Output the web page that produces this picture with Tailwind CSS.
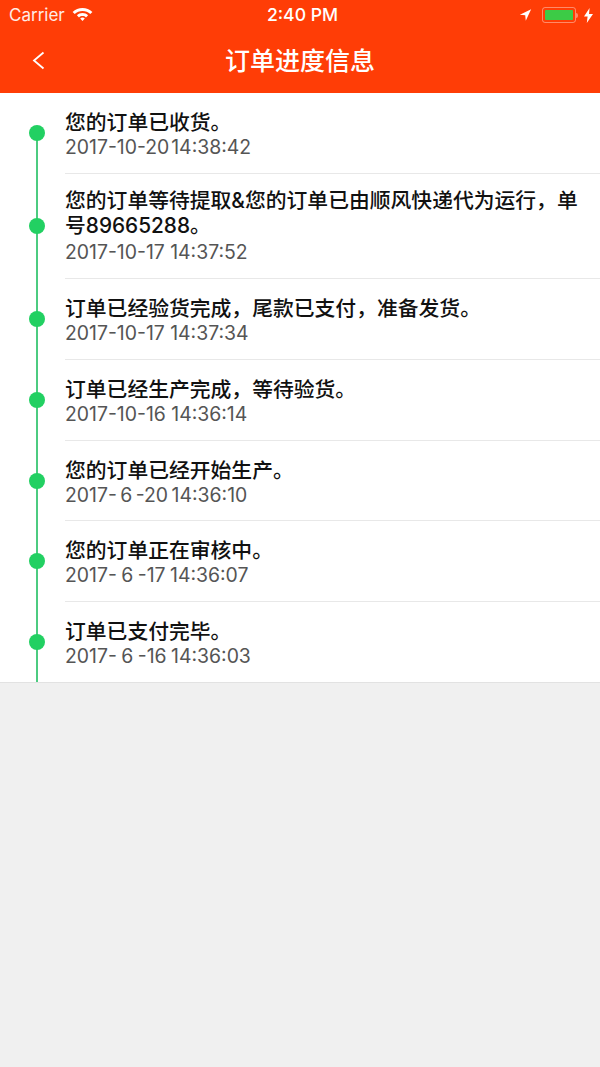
<!DOCTYPE html>
<html lang="zh-CN">
<head>
    <meta charset="UTF-8">
    <meta name="viewport" content="width=device-width, initial-scale=1.0">
    <title>订单进度信息</title>
    <script src="https://cdn.jsdelivr.net/npm/@tailwindcss/browser@4"></script>
</head>
<body class="bg-[#f0f0f0] font-['Inter','Noto_Sans_CJK_SC',sans-serif] text-[#111]">
    <div class="w-[600px] h-[1067px] flex flex-col">
        <header class="bg-[#ff3d06] h-[93px] text-white shrink-0">
            <div class="h-[30px] flex items-center pl-[9px] pr-[7px] relative text-[17px] text-white/90">
                <span class="mt-[1px]">Carrier</span>
                <svg class="ml-[7px]" width="21" height="16" viewBox="0 0 21 16" fill="white"><path d="M10.5 1C6.8 1 3.3 2.4.6 4.9l2.1 2.2C4.8 5.2 7.6 4.1 10.5 4.1s5.7 1.1 7.8 3l2.1-2.2C17.7 2.4 14.2 1 10.5 1z"/><path d="M10.5 6c-2.1 0-4.1.8-5.6 2.2l2.1 2.2c1-.9 2.2-1.4 3.5-1.4s2.5.5 3.5 1.4l2.1-2.2C14.6 6.8 12.6 6 10.5 6z"/><path d="M10.5 10.5c-.9 0-1.7.3-2.3.9l2.3 2.6 2.3-2.6c-.6-.6-1.4-.9-2.3-.9z"/></svg>
                <span class="absolute left-[5px] right-0 text-center text-[17.6px] font-medium text-white">2:40 PM</span>
                <div class="ml-auto flex items-center">
                    <svg width="13" height="14" viewBox="0 0 15 15" fill="white"><path d="M14 1 1 7.2l6.2.6.6 6.2z"/></svg>
                    <div class="ml-[10px] w-[34px] h-[16px] border border-white/40 rounded-[3px] p-[2px]">
                        <div class="w-full h-full bg-[#3ccb46] rounded-[1px]"></div>
                    </div>
                    <div class="w-[2px] h-[5px] bg-white/40 rounded-r-sm"></div>
                    <svg class="ml-[6px]" width="9" height="15" viewBox="0 0 9 15" fill="white"><path d="M5.6 0 0 8.6h3.6L2.8 15 9 6H5z"/></svg>
                </div>
            </div>
            <div class="h-[63px] flex items-center justify-center relative">
                <svg class="absolute left-[32px] top-[21px]" width="13" height="19" viewBox="0 0 13 19" fill="none" stroke="white" stroke-width="1.8"><path d="M11.5 1.5 2 9.5l9.5 8"/></svg>
                <h1 class="text-[25px] font-medium leading-none">订单进度信息</h1>
            </div>
        </header>

        <main class="bg-white border-b border-[#e2e2e2]">
            <div class="flex h-[81px]">
                <div class="w-[65px] shrink-0 relative">
                    <div class="absolute left-[36px] top-[40px] bottom-0 w-[2px] bg-[#4ccb80]"></div>
                    <div class="absolute left-[29px] top-[32px] w-[16px] h-[16px] rounded-full bg-[#22d062]"></div>
                </div>
                <div class="flex-1 border-b border-[#e8e8e8] pt-[17px]">
                    <p class="text-[20.8px] font-medium leading-[25px]">您的订单已收货。</p>
                    <p class="text-[19.4px] leading-[24px] text-[#555] [word-spacing:-3.5px]">2017-10-20 14:38:42</p>
                </div>
            </div>
            <div class="flex h-[105px]">
                <div class="w-[65px] shrink-0 relative">
                    <div class="absolute left-[36px] top-0 bottom-0 w-[2px] bg-[#4ccb80]"></div>
                    <div class="absolute left-[29px] top-[44px] w-[16px] h-[16px] rounded-full bg-[#22d062]"></div>
                </div>
                <div class="flex-1 border-b border-[#e8e8e8] pt-[14px] pr-[10px]">
                    <p class="text-[20.8px] font-medium leading-[25px]">您的订单等待提取&amp;您的订单已由顺风快递代为运行&#xFF0C;单号89665288。</p>
                    <p class="text-[19.4px] leading-[24px] mt-[2px] text-[#555]">2017-10-17 14:37:52</p>
                </div>
            </div>
            <div class="flex h-[81px]">
                <div class="w-[65px] shrink-0 relative">
                    <div class="absolute left-[36px] top-0 bottom-0 w-[2px] bg-[#4ccb80]"></div>
                    <div class="absolute left-[29px] top-[32px] w-[16px] h-[16px] rounded-full bg-[#22d062]"></div>
                </div>
                <div class="flex-1 border-b border-[#e8e8e8] pt-[18px]">
                    <p class="text-[20.8px] font-medium leading-[23px]">订单已经验货完成&#xFF0C;尾款已支付&#xFF0C;准备发货。</p>
                    <p class="text-[19.4px] leading-[24px] mt-[1px] text-[#555]">2017-10-17 14:37:34</p>
                </div>
            </div>
            <div class="flex h-[81px]">
                <div class="w-[65px] shrink-0 relative">
                    <div class="absolute left-[36px] top-0 bottom-0 w-[2px] bg-[#4ccb80]"></div>
                    <div class="absolute left-[29px] top-[32px] w-[16px] h-[16px] rounded-full bg-[#22d062]"></div>
                </div>
                <div class="flex-1 border-b border-[#e8e8e8] pt-[18px]">
                    <p class="text-[20.8px] font-medium leading-[23px]">订单已经生产完成&#xFF0C;等待验货。</p>
                    <p class="text-[19.4px] leading-[24px] mt-[1px] text-[#555]">2017-10-16 14:36:14</p>
                </div>
            </div>
            <div class="flex h-[80px]">
                <div class="w-[65px] shrink-0 relative">
                    <div class="absolute left-[36px] top-0 bottom-0 w-[2px] bg-[#4ccb80]"></div>
                    <div class="absolute left-[29px] top-[32px] w-[16px] h-[16px] rounded-full bg-[#22d062]"></div>
                </div>
                <div class="flex-1 border-b border-[#e8e8e8] pt-[18px]">
                    <p class="text-[20.8px] font-medium leading-[23px]">您的订单已经开始生产。</p>
                    <p class="text-[19.4px] leading-[24px] mt-[1px] text-[#555] [word-spacing:-2px]">2017- 6 -20 14:36:10</p>
                </div>
            </div>
            <div class="flex h-[81px]">
                <div class="w-[65px] shrink-0 relative">
                    <div class="absolute left-[36px] top-0 bottom-0 w-[2px] bg-[#4ccb80]"></div>
                    <div class="absolute left-[29px] top-[32px] w-[16px] h-[16px] rounded-full bg-[#22d062]"></div>
                </div>
                <div class="flex-1 border-b border-[#e8e8e8] pt-[18px]">
                    <p class="text-[20.8px] font-medium leading-[23px]">您的订单正在审核中。</p>
                    <p class="text-[19.4px] leading-[24px] mt-[1px] text-[#555] [word-spacing:-1px]">2017- 6 -17 14:36:07</p>
                </div>
            </div>
            <div class="flex h-[80px]">
                <div class="w-[65px] shrink-0 relative">
                    <div class="absolute left-[36px] top-0 bottom-0 w-[2px] bg-[#4ccb80]"></div>
                    <div class="absolute left-[29px] top-[32px] w-[16px] h-[16px] rounded-full bg-[#22d062]"></div>
                </div>
                <div class="flex-1 pt-[18px]">
                    <p class="text-[20.8px] font-medium leading-[23px]">订单已支付完毕。</p>
                    <p class="text-[19.4px] leading-[24px] mt-[1px] text-[#555] [word-spacing:-1px]">2017- 6 -16 14:36:03</p>
                </div>
            </div>
        </main>
    </div>
</body>
</html>
